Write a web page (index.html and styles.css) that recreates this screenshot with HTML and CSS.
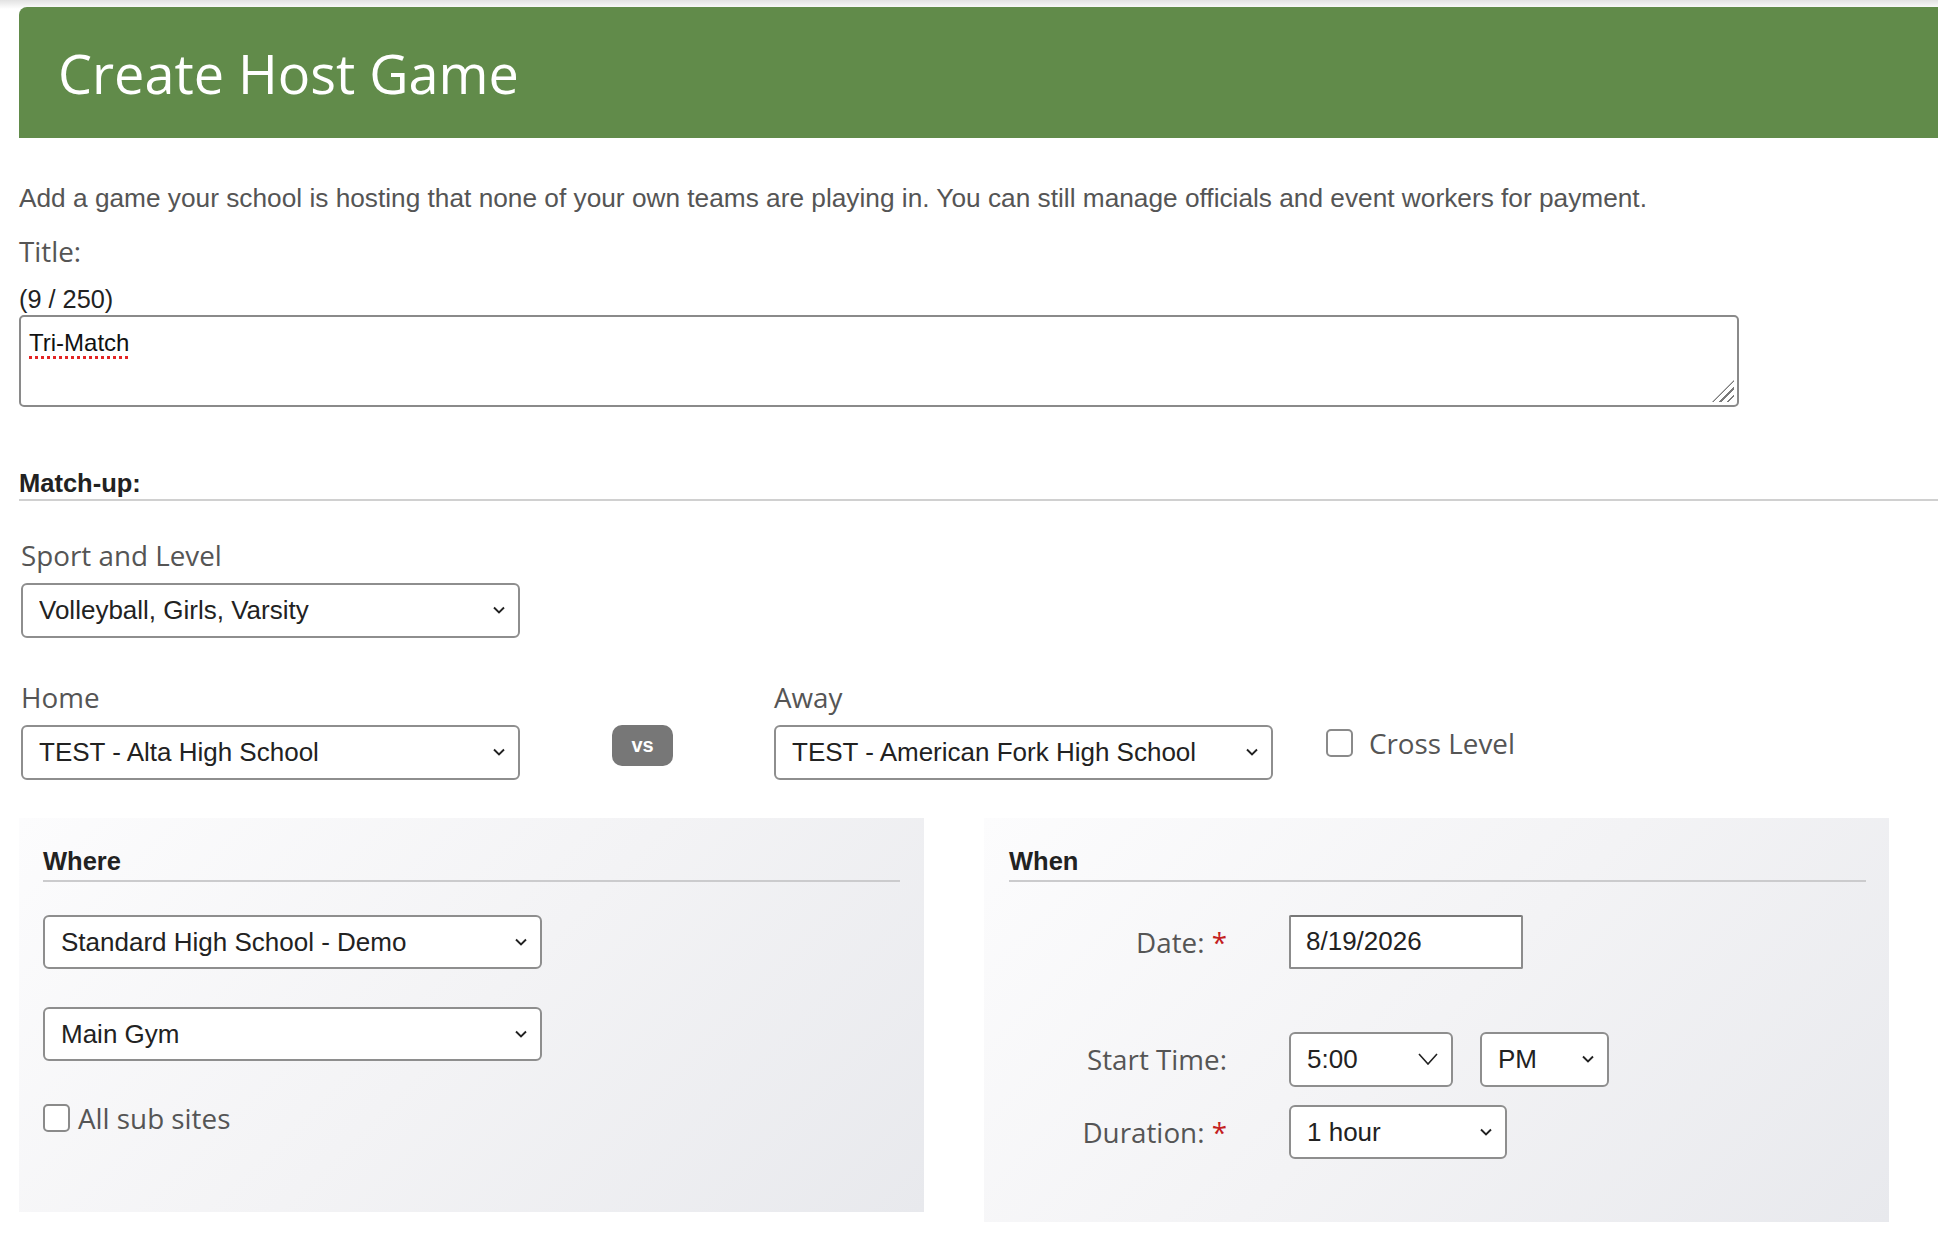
FILE: index.html
```html
<!DOCTYPE html>
<html lang="en">
<head>
    <meta charset="UTF-8">
    <meta name="viewport" content="width=device-width, initial-scale=1.0">
    <title>Create Host Game</title>
    <link rel="stylesheet" href="styles.css">
</head>
<body>
    <div class="page">
        <h1 class="banner">Create Host Game</h1>

        <p class="intro">Add a game your school is hosting that none of your own teams are playing in. You can still manage officials and event workers for payment.</p>

        <!-- Titulo del juego -->
        <div class="field-label">Title:</div>
        <div class="counter">(9 / 250)</div>
        <div class="title-box"><span class="misspelled">Tri-Match</span></div>

        <h2 class="section-title">Match-up:</h2>

        <div class="group sport">
            <div class="field-label">Sport and Level</div>
            <select class="select">
                <option>Volleyball, Girls, Varsity</option>
            </select>
        </div>

        <div class="matchup">
            <div class="group">
                <div class="field-label">Home</div>
                <select class="select">
                    <option>TEST - Alta High School</option>
                </select>
            </div>

            <div class="vs">vs</div>

            <div class="group away">
                <div class="field-label">Away</div>
                <select class="select">
                    <option>TEST - American Fork High School</option>
                </select>
            </div>

            <label class="check cross">
                <input type="checkbox">
                <span>Cross Level</span>
            </label>
        </div>

        <div class="panels">
            <!-- Donde -->
            <div class="panel where">
                <h3 class="panel-title">Where</h3>
                <select class="select site">
                    <option>Standard High School - Demo</option>
                </select>
                <select class="select site second">
                    <option>Main Gym</option>
                </select>
                <label class="check subsites">
                    <input type="checkbox">
                    <span>All sub sites</span>
                </label>
            </div>

            <!-- Cuando -->
            <div class="panel when">
                <h3 class="panel-title">When</h3>

                <div class="row date-row">
                    <div class="row-label">Date: <span class="req">*</span></div>
                    <input class="date-input" type="text" value="8/19/2026">
                </div>

                <div class="row time-row">
                    <div class="row-label">Start Time:</div>
                    <select class="select time big-arrow">
                        <option>5:00</option>
                    </select>
                    <select class="select ampm">
                        <option>PM</option>
                    </select>
                </div>

                <div class="row duration-row">
                    <div class="row-label">Duration: <span class="req">*</span></div>
                    <select class="select duration">
                        <option>1 hour</option>
                    </select>
                </div>
            </div>
        </div>
    </div>
</body>
</html>
```

FILE: styles.css
```css
body {
    margin: 0;
    font-family: "Liberation Sans", Arial, sans-serif;
    color: #222;
    background: linear-gradient(#e2e2e2, #fff 9px) no-repeat;
    overflow: hidden;
}

.page {
    padding: 7px 0 0 19px;
}

/* Cabecera verde */
.banner {
    margin: 0;
    height: 131px;
    display: flex;
    align-items: center;
    padding-left: 39px;
    background-color: #618b4a;
    border-top-left-radius: 8px;
    color: white;
    font-family: "Open Sans", sans-serif;
    font-weight: 400;
    font-size: 54px;
}

.intro {
    margin: 45px 0 0;
    font-size: 26.25px;
    line-height: 30px;
    color: #555;
}

.field-label {
    margin-top: 20px;
    font-family: "Open Sans", sans-serif;
    font-size: 27.8px;
    line-height: 36px;
    color: #555;
}

.counter {
    margin-top: 16px;
    font-size: 25.3px;
    line-height: 28px;
    color: #222;
}

.title-box {
    position: relative;
    margin-top: 2px;
    width: 1720px;
    height: 92px;
    box-sizing: border-box;
    padding: 10px 8px;
    border: 2px solid #8a8a8a;
    border-radius: 5px;
    font-size: 24px;
    line-height: 1.3;
    color: #111;
    background: white;
}

/* Agarradera para cambiar tamaño */
.title-box::after {
    content: "";
    position: absolute;
    right: 3px;
    bottom: 3px;
    width: 22px;
    height: 22px;
    background: repeating-linear-gradient(135deg, transparent 0 3.5px, #7a7a7a 3.5px 5.5px);
    clip-path: polygon(100% 0, 100% 100%, 0 100%);
}

.misspelled {
    text-decoration: underline dotted #e32424;
    text-decoration-thickness: 2.5px;
    text-underline-offset: 5px;
}

.section-title {
    margin: 61px 0 0;
    font-size: 25.5px;
    line-height: 31px;
    font-weight: bold;
    border-bottom: 2px solid #d0d0d0;
}

/* Grupos de campos */
.group {
    margin-left: 2px;
}

.group .field-label {
    margin-top: 0;
    margin-bottom: 10px;
}

.sport {
    margin-top: 35.5px;
}

.select {
    display: block;
    width: 499px;
    height: 55px;
    box-sizing: border-box;
    padding: 0 36px 0 16px;
    border: 2px solid #8e8e8e;
    border-radius: 6px;
    font-family: "Liberation Sans", Arial, sans-serif;
    font-size: 26px;
    color: #222;
    background-color: white;
    background-image: url("data:image/svg+xml;utf8,<svg xmlns='http://www.w3.org/2000/svg' viewBox='0 0 12 8'><path d='M1 1.5 L6 6.5 L11 1.5' fill='none' stroke='%23222' stroke-width='1.9'/></svg>");
    background-repeat: no-repeat;
    background-position: right 13px center;
    background-size: 12px 8px;
    -webkit-appearance: none;
    appearance: none;
}

.select.big-arrow {
    background-image: url("data:image/svg+xml;utf8,<svg xmlns='http://www.w3.org/2000/svg' viewBox='0 0 20 12'><path d='M1 1 L10 11 L19 1' fill='none' stroke='%23222' stroke-width='1.6'/></svg>");
    background-size: 20px 12px;
}

.matchup {
    display: flex;
    align-items: flex-start;
    margin-top: 41px;
}

.vs {
    margin: 46px 0 0 92px;
    width: 61px;
    height: 41px;
    line-height: 41px;
    border-radius: 10px;
    background-color: #777;
    color: white;
    font-weight: bold;
    font-size: 20px;
    text-align: center;
}

.away {
    margin-left: 101px;
}

/* Casillas */
.check {
    display: flex;
    align-items: center;
    font-family: "Open Sans", sans-serif;
    font-size: 27.8px;
    line-height: 36px;
    color: #555;
}

.check input {
    -webkit-appearance: none;
    appearance: none;
    margin: 0 8px 0 0;
    width: 27px;
    height: 28px;
    box-sizing: border-box;
    border: 2px solid #8a8a8a;
    border-radius: 5px;
    background: white;
}

.cross {
    margin: 46px 0 0 53px;
}

.cross input {
    margin-right: 16px;
}

/* Paneles */
.panels {
    display: flex;
    align-items: flex-start;
    gap: 60px;
    margin-top: 38px;
}

.panel {
    width: 905px;
    box-sizing: border-box;
    padding: 28px 24px 0;
    background: linear-gradient(135deg, #fcfcfd 0%, #f3f3f5 50%, #e8e9ed 100%);
}

.where {
    height: 394px;
}

.when {
    height: 404px;
    padding-left: 25px;
    padding-right: 23px;
}

.panel-title {
    margin: 0;
    padding-bottom: 4px;
    font-size: 25.5px;
    line-height: 30px;
    border-bottom: 2px solid #cbcbcd;
}

.site {
    margin-top: 33px;
    height: 54px;
}

.site.second {
    margin-top: 38px;
}

.subsites {
    margin-top: 39px;
}

.subsites input {
    margin-right: 8px;
}

.row {
    display: flex;
    align-items: center;
}

.row-label {
    width: 218px;
    margin-right: 62px;
    text-align: right;
    font-family: "Open Sans", sans-serif;
    font-size: 27.8px;
    line-height: 36px;
    color: #555;
}

.req {
    color: #c41f1f;
}

.date-row {
    margin-top: 33px;
}

.date-input {
    width: 234px;
    height: 54px;
    box-sizing: border-box;
    padding: 0 15px;
    border: 2px solid #8c8c8c;
    border-top-color: #777;
    border-radius: 2px;
    font-family: "Liberation Sans", Arial, sans-serif;
    font-size: 26px;
    color: #222;
    background: white;
}

.time-row {
    margin-top: 63px;
}

.time {
    width: 164px;
}

.ampm {
    width: 129px;
    margin-left: 27px;
}

.duration-row {
    margin-top: 18px;
}

.duration {
    width: 218px;
    height: 54px;
}
```
